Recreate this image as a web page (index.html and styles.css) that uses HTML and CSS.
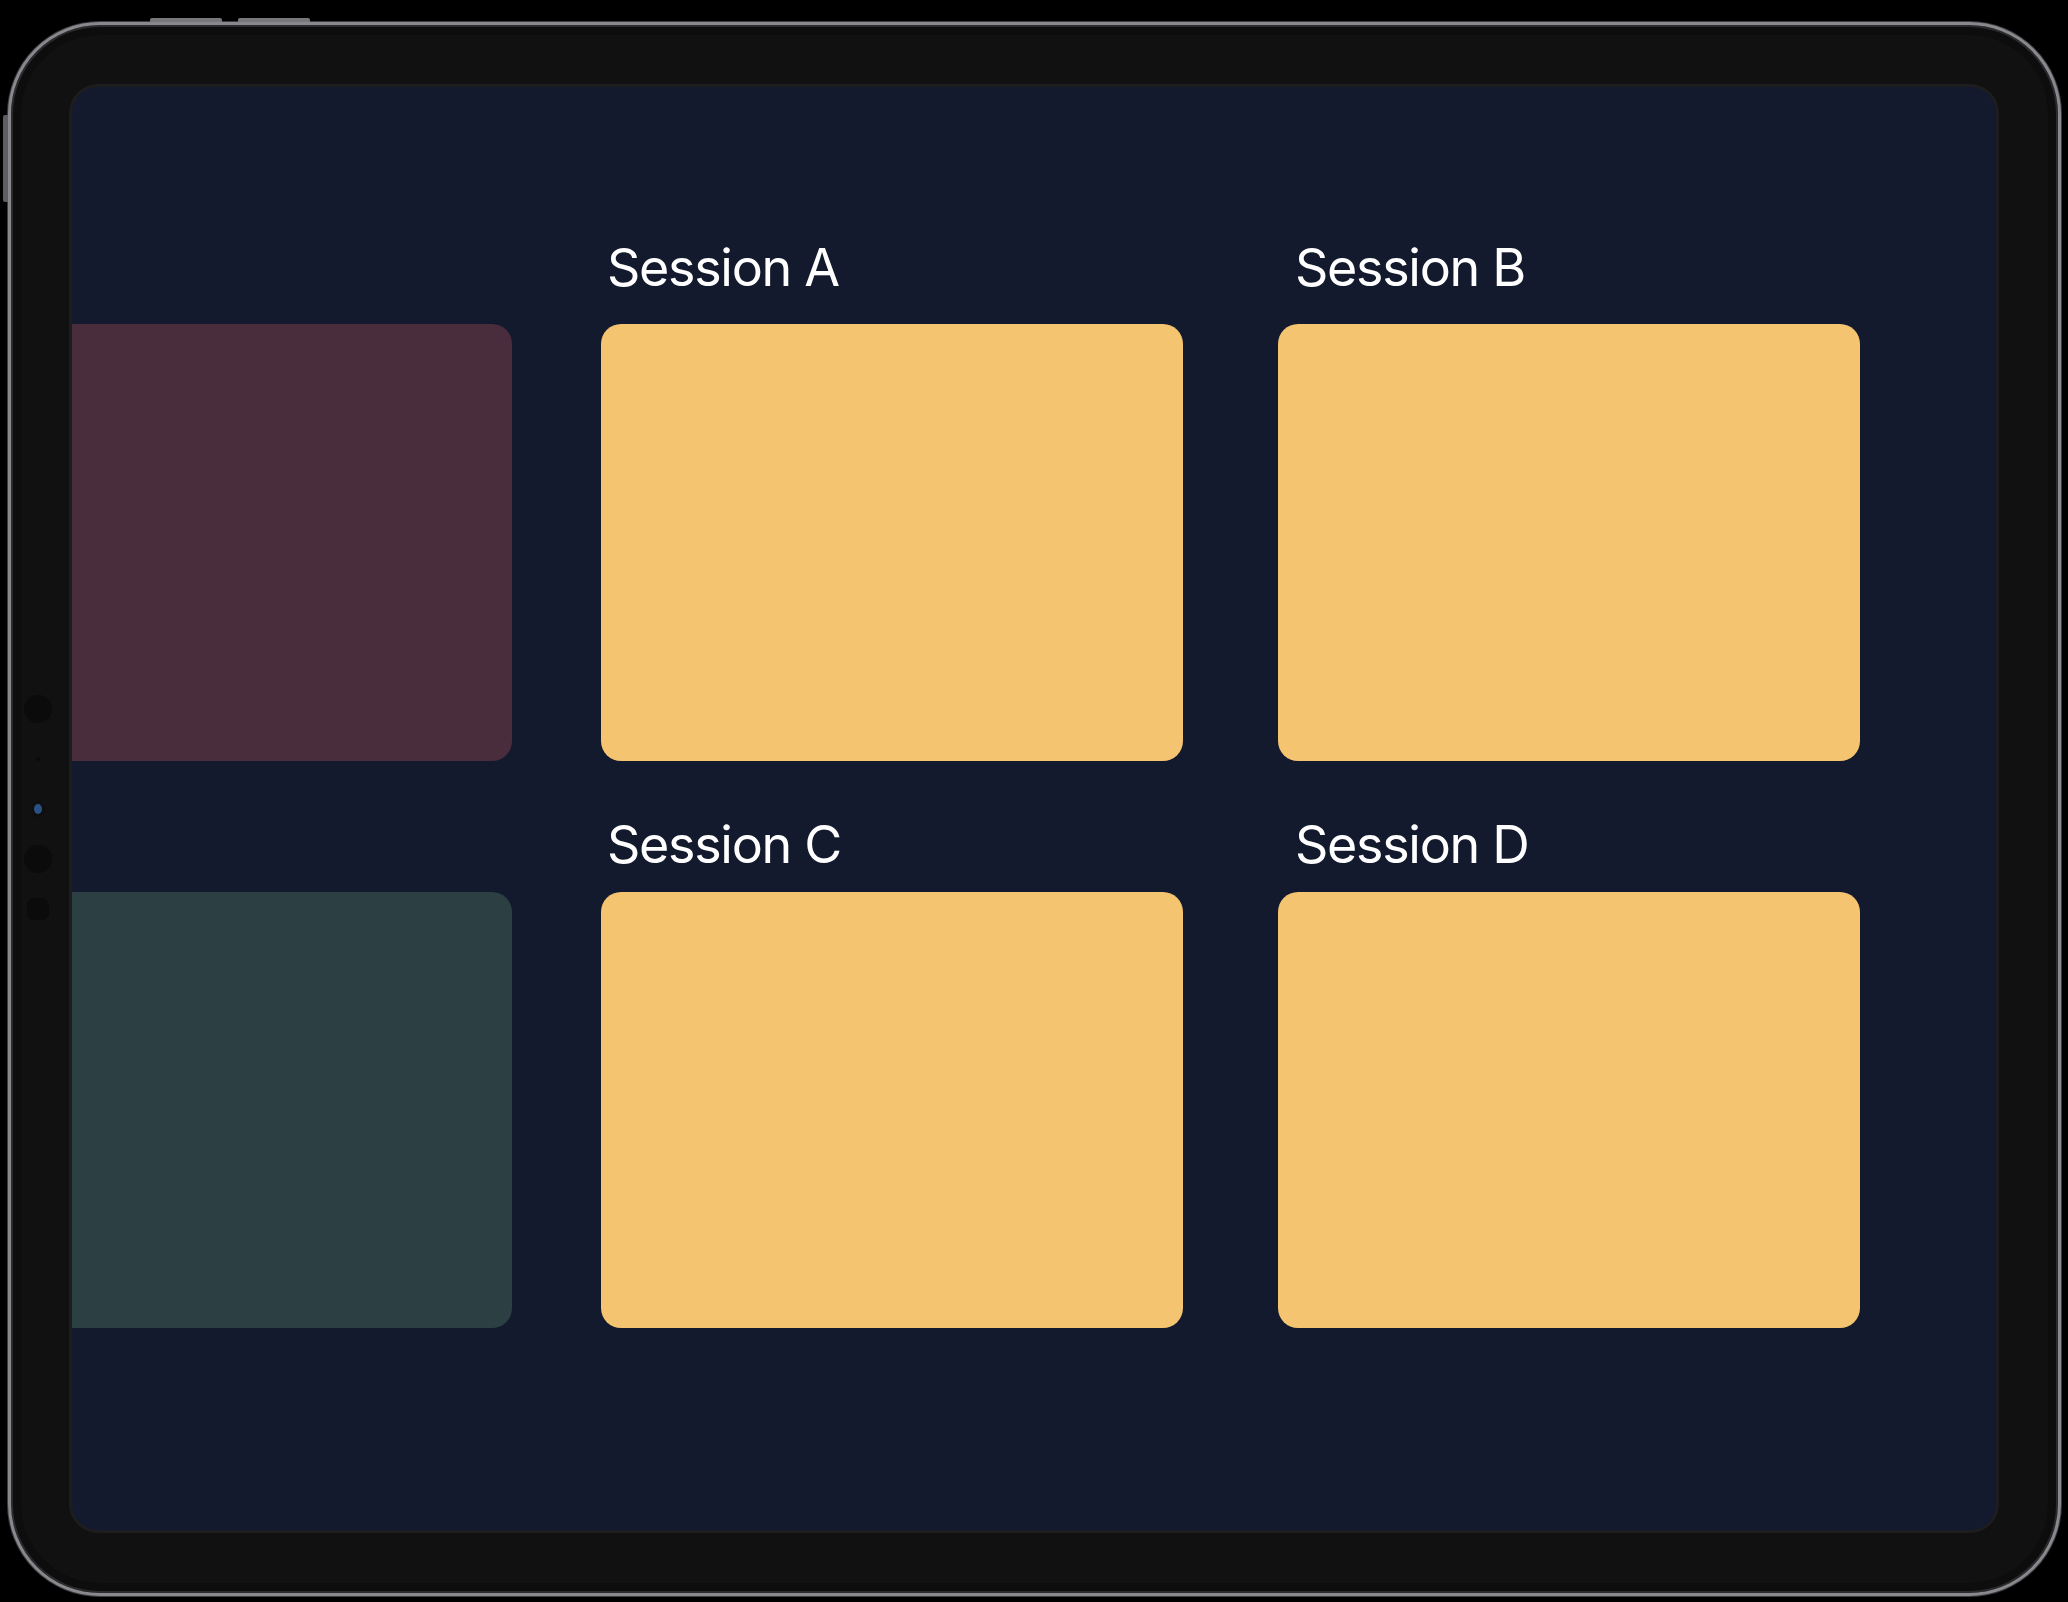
FILE: index.html
```html
<!DOCTYPE html>
<html lang="en">

<head>
  <meta charset="UTF-8" />
  <meta name="viewport" content="width=device-width, initial-scale=1.0" />
  <title>Sessions</title>
  <link rel="stylesheet" href="styles.css">
</head>

<body>
  <div class="device">
    <!-- hardware buttons -->
    <span class="btn btn-top btn-top-1"></span>
    <span class="btn btn-top btn-top-2"></span>
    <span class="btn btn-side"></span>

    <!-- camera + sensors in the left bezel -->
    <div class="sensors">
      <span class="slot"><i class="sensor round"></i></span>
      <span class="slot"><i class="sensor dot"></i></span>
      <span class="slot"><i class="sensor lens"></i></span>
      <span class="slot"><i class="sensor round"></i></span>
      <span class="slot"><i class="sensor square"></i></span>
    </div>

    <main class="screen">
      <div class="row">
        <div class="item prev">
          <div class="card card-purple"></div>
        </div>
        <div class="item">
          <h2 class="label">Session A</h2>
          <div class="card"></div>
        </div>
        <div class="item">
          <h2 class="label label-inset">Session B</h2>
          <div class="card"></div>
        </div>
      </div>

      <div class="row row-second">
        <div class="item prev">
          <div class="card card-teal"></div>
        </div>
        <div class="item">
          <h2 class="label">Session C</h2>
          <div class="card"></div>
        </div>
        <div class="item">
          <h2 class="label label-inset">Session D</h2>
          <div class="card"></div>
        </div>
      </div>
    </main>
  </div>
</body>

</html>
```

FILE: styles.css
```css
html,
body {
  margin: 0;
  height: 100%;
  overflow: hidden;
  background-color: #000;
}

body {
  font-family: Inter, "Noto Sans", "Liberation Sans", sans-serif;
  padding: 22px 0 0 8px;
  box-sizing: border-box;
}

/* device frame */
.device {
  position: relative;
  display: flex;
  width: 2053px;
  height: 1574px;
  box-sizing: border-box;
  padding: 62px 62px 63px 0;
  background-color: #111111;
  border: 3px solid #88888d;
  border-radius: 92px;
  box-shadow: 0 0 0 1px #3c3c40, inset 0 0 0 2px #2b2b2e, inset 0 0 0 10px #0d0d0d;
}

.btn {
  position: absolute;
  background-color: #77777c;
}

.btn-top {
  top: -7px;
  width: 72px;
  height: 4px;
  border-radius: 2px 2px 0 0;
}

.btn-top-1 {
  left: 139px;
}

.btn-top-2 {
  left: 227px;
}

.btn-side {
  left: -8px;
  top: 90px;
  width: 5px;
  height: 87px;
  border-radius: 2px 0 0 2px;
  background-color: #5d5d62;
}

.sensors {
  width: 54px;
  margin-right: 7px;
  flex-shrink: 0;
  display: flex;
  flex-direction: column;
  justify-content: center;
  align-items: center;
}

.slot {
  height: 50px;
  display: flex;
  align-items: center;
  justify-content: center;
}

.sensor {
  display: block;
  background-color: #0b0b0b;
}

.round {
  width: 28px;
  height: 28px;
  border-radius: 50%;
}

.dot {
  width: 4px;
  height: 4px;
  border-radius: 50%;
}

.lens {
  width: 8px;
  height: 10px;
  border-radius: 50%;
  background-color: #2a5185;
  box-shadow: 0 0 0 3px #0f0f10;
}

.square {
  width: 22px;
  height: 22px;
  border-radius: 7px;
}

/* screen */
.screen {
  flex: 1;
  padding-top: 149px;
  background-color: #141a2e;
  border-radius: 26px;
  box-shadow: 0 0 0 3px #1d1d1f;
  overflow: hidden;
}

.row {
  display: flex;
  align-items: flex-end;
  gap: 95px;
  margin-left: -142px;
}

.row-second {
  margin-top: 52px;
}

.item {
  flex-shrink: 0;
  width: 582px;
}

.item.prev {
  margin-right: -6px;
}

.label {
  margin: 0 0 25px;
  padding-left: 6px;
  color: #fff;
  font-size: 52px;
  font-weight: 400;
  line-height: 63px;
  letter-spacing: -1.3px;
  white-space: nowrap;
}

.label-inset {
  padding-left: 17px;
}

.row-second .label {
  margin-bottom: 16px;
}

.card {
  height: 437px;
  border-radius: 20px;
  background-color: #f4c470;
}

.row-second .card {
  height: 436px;
}

.card-purple {
  background-color: #4a2d3c;
}

.card-teal {
  background-color: #2c4044;
}
```
